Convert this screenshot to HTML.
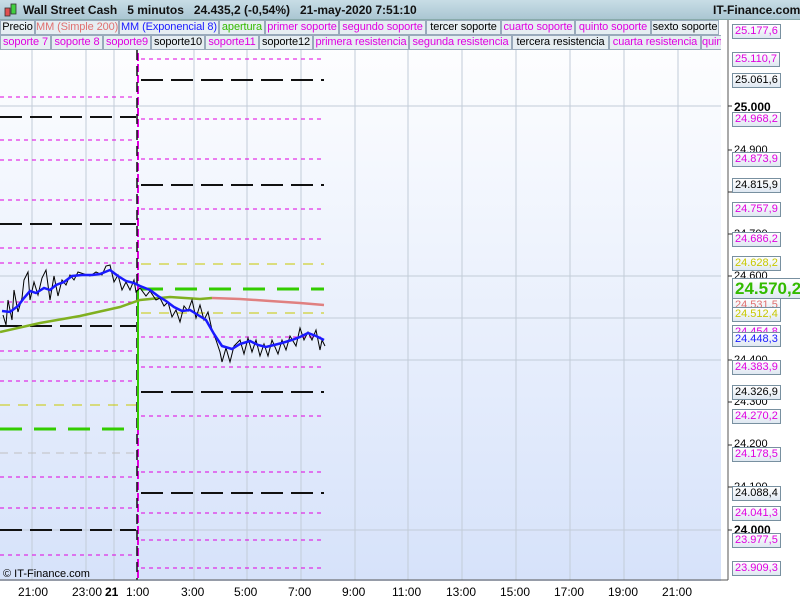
<!DOCTYPE html>
<html><head><meta charset="utf-8"><style>
body{margin:0;width:800px;height:600px;overflow:hidden;font-family:"Liberation Sans",sans-serif;background:#fff;position:relative}
.hdr{position:absolute;left:0;top:0;width:800px;height:19px;background:linear-gradient(#c8dde6,#aac6d2);border-bottom:1px solid #8aa}
.hdr span{position:absolute;top:3px;font-size:12px;font-weight:bold;color:#111;white-space:nowrap}
.leg{position:absolute;left:0;height:15px;width:721px;font-size:11px;white-space:nowrap;overflow:hidden}
.leg div{position:absolute;top:0;height:13px;background:#e6eef2;border:1px solid #9ab;line-height:13px;overflow:hidden;text-align:center;letter-spacing:-0.1px}
.lbl{position:absolute;left:732px;font-size:11px;background:linear-gradient(#fff,#dfe8f2);border:1px solid #7890a0;padding:0 2px;line-height:13px}
.tick{position:absolute;left:734px;font-size:11px;color:#000}
.xl{position:absolute;top:585px;font-size:12px;color:#000}
</style></head><body>
<svg width="800" height="600" style="position:absolute;left:0;top:0">
<defs><linearGradient id="g" x1="0" y1="0" x2="0" y2="1"><stop offset="0" stop-color="#ffffff"/><stop offset="1" stop-color="#d6e2fa"/></linearGradient></defs>
<rect x="0" y="20" width="721" height="561" fill="url(#g)"/>
<g stroke="#c2ccd8" stroke-width="1">
<line x1="32" y1="20" x2="32" y2="580"/><line x1="86" y1="20" x2="86" y2="580"/><line x1="114" y1="20" x2="114" y2="580"/>
<line x1="194" y1="20" x2="194" y2="580"/><line x1="247" y1="20" x2="247" y2="580"/><line x1="301" y1="20" x2="301" y2="580"/><line x1="355" y1="20" x2="355" y2="580"/><line x1="408" y1="20" x2="408" y2="580"/><line x1="462" y1="20" x2="462" y2="580"/><line x1="516" y1="20" x2="516" y2="580"/><line x1="570" y1="20" x2="570" y2="580"/><line x1="624" y1="20" x2="624" y2="580"/><line x1="678" y1="20" x2="678" y2="580"/>
<line x1="0" y1="106" x2="721" y2="106"/><line x1="0" y1="276" x2="721" y2="276"/><line x1="0" y1="318" x2="721" y2="318"/><line x1="0" y1="360" x2="721" y2="360"/><line x1="0" y1="530" x2="721" y2="530"/>
</g>
<g stroke="#e000e0" stroke-width="1" stroke-dasharray="4,4" fill="none">
<path d="M0 97H136M0 140H136M0 160H136M0 200H136M0 248H136M0 263H136M0 302H136M0 351H136M0 381H136M0 477H136M0 508H136M0 555H136"/>
<path d="M141 59H324M141 119H324M141 159H324M141 209H324M141 239H324M141 337H324M141 367H324M141 416H324M141 472H324M141 513H324M141 540H324M141 568H324"/>
</g>
<g stroke="#c8c800" stroke-width="1" stroke-dasharray="10,8"><path d="M0 405H136M141 264H324M141 313H324"/></g>
<g stroke="#c0c0c0" stroke-width="1" stroke-dasharray="8,6"><path d="M0 453H136"/></g>
<g stroke="#111" stroke-width="2" stroke-dasharray="22,8" fill="none">
<path d="M0 117H136M0 224H136M0 326H136M0 530H136"/>
<path d="M141 80H324M141 185H324M141 392H324M141 493H324"/>
</g>
<g stroke="#33cc00" stroke-width="3" stroke-dasharray="22,12"><path d="M0 429H136M141 289H324"/></g>
<path d="M138 20V580" stroke="#e000e0" stroke-width="2" stroke-dasharray="8,3"/>
<path d="M137 50V580" stroke="#111" stroke-width="1.5" stroke-dasharray="10,6"/>
<path d="M138 290V430" stroke="#33cc00" stroke-width="2"/>
<path d="M0 332L40 323L80 316L120 307L140 300L170 297L200 299L212 298" stroke="#80b020" stroke-width="2.5" fill="none"/>
<path d="M212 298L240 299L270 301L300 303L324 305" stroke="#e08080" stroke-width="2.5" fill="none"/>
<g stroke="#000" stroke-width="1" fill="none">
<path d="M3 315L6 325L8 300L12 320L14 290L18 312L22 298L24 280L28 272L30 300L34 282L38 295L42 278L46 270L50 300L54 276L58 296L62 280L66 285L70 275L74 280L78 272L84 274L90 276L96 272L102 275L106 266L110 265L114 282L118 275L122 290L126 282L130 290L134 280L136 292L140 288L146 296L150 291L156 300L160 298L164 306L168 302L172 317L176 310L180 322L184 306L188 311L192 300L196 318L200 305L204 320L208 312L212 330L216 340L220 352L222 362L226 348L230 362L234 346L240 340L244 354L248 338L252 352L256 340L260 356L264 344L268 356L272 340L278 354L282 340L286 350L290 336L296 346L300 328L304 340L308 332L312 340L316 330L320 350L322 340L325 346"/>
</g>
<path d="M2 311L10 312L18 306L24 298L30 291L36 293L44 288L50 290L56 285L64 282L72 276L82 275L92 275L100 274L110 270L118 276L126 281L134 283L140 286L150 290L158 296L166 301L174 307L182 311L190 310L198 315L206 320L214 334L222 346L232 349L240 344L250 341L258 345L266 347L274 345L282 343L292 340L300 337L308 333L316 336L324 340" stroke="#1a1aff" stroke-width="2.5" fill="none"/>
<line x1="728" y1="20" x2="728" y2="580" stroke="#555"/>
<line x1="0" y1="580" x2="728" y2="580" stroke="#555"/>
<g stroke="#333"><path d="M728 106h4M728 150h4M728 192h4M728 234h4M728 276h4M728 360h4M728 402h4M728 445h4M728 487h4M728 530h4"/></g>
</svg>
<div class="hdr"><span style="left:4px;top:2px;"><svg width="14" height="16"><rect x="1" y="6" width="5" height="8" fill="#e05050" stroke="#333" stroke-width=".8"/><rect x="7" y="2" width="5" height="10" fill="#40d040" stroke="#333" stroke-width=".8"/></svg></span><span style="left:23px">Wall Street Cash &nbsp;&nbsp;5 minutos &nbsp;&nbsp;24.435,2 (-0,54%) &nbsp;&nbsp;21-may-2020 7:51:10</span><span style="left:713px">IT-Finance.com</span></div>
<div class="leg" style="top:20px">
<div style="left:0;width:33px">Precio</div>
<div style="left:35px;width:82px;color:#e07070">MM (Simple 200)</div>
<div style="left:119px;width:98px;color:#1a1aff">MM (Exponencial 8)</div>
<div style="left:219px;width:44px;color:#33bb00">apertura</div>
<div style="left:265px;width:72px;color:#e000e0">primer soporte</div>
<div style="left:339px;width:85px;color:#e000e0">segundo soporte</div>
<div style="left:426px;width:73px">tercer soporte</div>
<div style="left:501px;width:72px;color:#e000e0">cuarto soporte</div>
<div style="left:575px;width:74px;color:#e000e0">quinto soporte</div>
<div style="left:651px;width:66px">sexto soporte</div>
</div>
<div class="leg" style="top:35px">
<div style="left:0;width:49px;color:#e000e0">soporte 7</div>
<div style="left:51px;width:50px;color:#e000e0">soporte 8</div>
<div style="left:103px;width:46px;color:#e000e0">soporte9</div>
<div style="left:151px;width:52px">soporte10</div>
<div style="left:205px;width:52px;color:#e000e0">soporte11</div>
<div style="left:259px;width:52px">soporte12</div>
<div style="left:313px;width:94px;color:#e000e0">primera resistencia</div>
<div style="left:409px;width:101px;color:#e000e0">segunda resistencia</div>
<div style="left:512px;width:95px">tercera resistencia</div>
<div style="left:609px;width:90px;color:#e000e0">cuarta resistencia</div>
<div style="left:701px;width:40px;color:#e000e0;text-align:left">quinta</div>
</div>
<div class="tick" style="top:100px;font-weight:bold;font-size:12px">25.000</div>
<div class="tick" style="top:144px">24.900</div><div class="tick" style="top:228px">24.700</div><div class="tick" style="top:270px">24.600</div><div class="tick" style="top:354px">24.400</div><div class="tick" style="top:396px">24.300</div><div class="tick" style="top:438px">24.200</div><div class="tick" style="top:481px">24.100</div><div class="tick" style="top:523px;font-weight:bold;font-size:12px">24.000</div>
<div class="lbl" style="top:24px;color:#e000e0">25.177,6</div>
<div class="lbl" style="top:52px;color:#e000e0">25.110,7</div>
<div class="lbl" style="top:73px">25.061,6</div>
<div class="lbl" style="top:112px;color:#e000e0">24.968,2</div>
<div class="lbl" style="top:152px;color:#e000e0">24.873,9</div>
<div class="lbl" style="top:178px">24.815,9</div>
<div class="lbl" style="top:202px;color:#e000e0">24.757,9</div>
<div class="lbl" style="top:232px;color:#e000e0">24.686,2</div>
<div class="lbl" style="top:256px;color:#c8c800">24.628,2</div>
<div class="lbl" style="top:278px;color:#33bb00;font-size:17px;font-weight:bold;line-height:19px;left:732px">24.570,2</div>
<div class="lbl" style="top:298px;color:#e07070">24.531,5</div>
<div class="lbl" style="top:307px;color:#c8c800">24.512,4</div>
<div class="lbl" style="top:325px;color:#e000e0">24.454,8</div>
<div class="lbl" style="top:332px;color:#1a1aff">24.448,3</div>
<div class="lbl" style="top:360px;color:#e000e0">24.383,9</div>
<div class="lbl" style="top:385px">24.326,9</div>
<div class="lbl" style="top:409px;color:#e000e0">24.270,2</div>
<div class="lbl" style="top:447px;color:#e000e0">24.178,5</div>
<div class="lbl" style="top:486px">24.088,4</div>
<div class="lbl" style="top:506px;color:#e000e0">24.041,3</div>
<div class="lbl" style="top:533px;color:#e000e0">23.977,5</div>
<div class="lbl" style="top:561px;color:#e000e0">23.909,3</div>
<div style="position:absolute;left:3px;top:568px;font-size:11px">© IT-Finance.com</div>
<div class="xl" style="left:18px">21:00</div><div class="xl" style="left:72px">23:00</div><div class="xl" style="left:105px;font-weight:bold">21</div><div class="xl" style="left:126px">1:00</div><div class="xl" style="left:181px">3:00</div><div class="xl" style="left:234px">5:00</div><div class="xl" style="left:288px">7:00</div><div class="xl" style="left:342px">9:00</div><div class="xl" style="left:392px">11:00</div><div class="xl" style="left:446px">13:00</div><div class="xl" style="left:500px">15:00</div><div class="xl" style="left:554px">17:00</div><div class="xl" style="left:608px">19:00</div><div class="xl" style="left:662px">21:00</div>
</body></html>
